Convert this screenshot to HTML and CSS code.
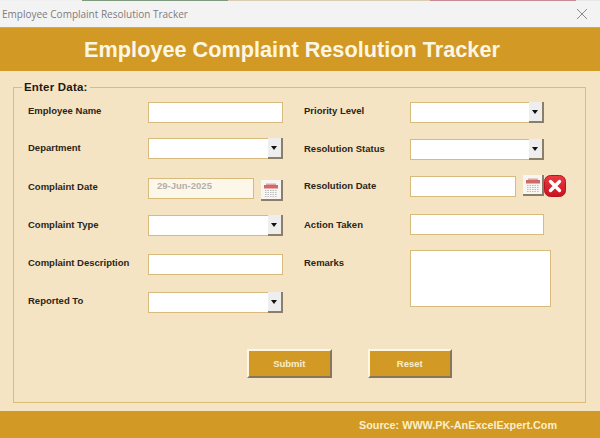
FILE: index.html
```html
<!DOCTYPE html>
<html lang="en">
<head>
<meta charset="utf-8">
<title>Employee Complaint Resolution Tracker</title>
<link rel="stylesheet" href="styles.css">
</head>
<body>
<div class="strip"><i class="s1"></i><i class="s2"></i><i class="s3"></i><i class="s4"></i><i class="s5"></i></div>
<div class="titlebar">
  <span>Employee Complaint Resolution Tracker</span>
  <svg class="close" width="12" height="12" viewBox="0 0 12 12"><path d="M1 1L11 11M11 1L1 11" stroke="#8a8a8a" stroke-width="1" fill="none"/></svg>
</div>
<header class="banner">Employee Complaint Resolution Tracker</header>
<main class="content">
  <fieldset class="panel">
    <legend>Enter Data:</legend>
    <div class="columns">
      <div class="col col-left">
        <div class="row"><label class="lbl-3">Employee Name</label><div class="field"></div></div>
        <div class="row"><label class="lbl-4">Department</label><div class="field combo"><b class="arrow"></b></div></div>
        <div class="row"><label class="lbl-3">Complaint Date</label><div class="field short date">29-Jun-2025</div>
          <div class="cal"><svg width="14" height="14" viewBox="0 0 14 14"><rect x="0" y="2" width="14" height="3.5" fill="#cf6a68"/><rect x="2" y="0.5" width="10" height="1.5" fill="#e2a5a3"/><path d="M1 7.5h12M1 9.5h12M1 11.5h12M1 13.5h12" stroke="#bdbdbd" stroke-width="1" stroke-dasharray="1.5 1"/></svg></div></div>
        <div class="row"><label class="lbl-4">Complaint Type</label><div class="field combo"><b class="arrow"></b></div></div>
        <div class="row"><label class="lbl-3">Complaint Description</label><div class="field"></div></div>
        <div class="row"><label class="lbl-3">Reported To</label><div class="field combo"><b class="arrow"></b></div></div>
      </div>
      <div class="col col-right">
        <div class="row"><label class="lbl-3">Priority Level</label><div class="field combo"><b class="arrow"></b></div></div>
        <div class="row"><label class="lbl-4">Resolution Status</label><div class="field combo"><b class="arrow"></b></div></div>
        <div class="row"><label class="lbl-4">Resolution Date</label><div class="field short"></div>
          <div class="cal cal-tight"><svg width="14" height="14" viewBox="0 0 14 14"><rect x="0" y="2" width="14" height="3.5" fill="#cf6a68"/><rect x="2" y="0.5" width="10" height="1.5" fill="#e2a5a3"/><path d="M1 7.5h12M1 9.5h12M1 11.5h12M1 13.5h12" stroke="#bdbdbd" stroke-width="1" stroke-dasharray="1.5 1"/></svg></div>
          <div class="clear"><svg width="22" height="22" viewBox="0 0 22 22"><defs><linearGradient id="red" x1="0" y1="0" x2="0" y2="1"><stop offset="0" stop-color="#ee3a42"/><stop offset="1" stop-color="#c8121e"/></linearGradient></defs><rect x="0.5" y="0.5" width="21" height="21" rx="6" fill="url(#red)" stroke="#b8141f"/><path d="M6.5 6.5L15.5 15.5M15.5 6.5L6.5 15.5" stroke="#fff" stroke-width="3.4" stroke-linecap="round"/></svg></div></div>
        <div class="row"><label class="lbl-5">Action Taken</label><div class="field"></div></div>
        <div class="row"><label class="lbl-7">Remarks</label><div class="field memo"></div></div>
      </div>
    </div>
    <div class="actions">
      <button class="btn" type="button">Submit</button>
      <button class="btn" type="button">Reset</button>
    </div>
  </fieldset>
</main>
<footer class="foot">Source: WWW.PK-AnExcelExpert.Com</footer>
</body>
</html>
```

FILE: styles.css
```css
* { box-sizing: border-box; }
html, body { margin: 0; padding: 0; }
body {
  width: 600px;
  height: 438px;
  overflow: hidden;
  display: flex;
  flex-direction: column;
  font-family: "Liberation Sans", Arial, sans-serif;
  background: #f5e4c3;
}
.strip { display: flex; height: 1px; flex: none; }
.strip i { display: block; }
.s1 { width: 82px; background: #efefef; }
.s2 { width: 146px; background: #7f9a7f; }
.s3 { width: 202px; background: #d9cdb0; }
.s4 { width: 146px; background: #c98a93; }
.s5 { flex: 1; background: #e8e8e8; }
.titlebar {
  height: 27px;
  flex: none;
  display: flex;
  align-items: center;
  justify-content: space-between;
  padding: 0 12px 1px 2px;
  background: #f3f3f4;
  border-bottom: 1px solid #b5ab98;
  font-family: "Open Sans", sans-serif;
  font-size: 10px;
  color: #7c7c7c;
}
.banner {
  height: 43px;
  flex: none;
  display: flex;
  align-items: center;
  justify-content: center;
  padding-right: 16px;
  background: #d29a25;
  color: #fdf6e3;
  font-size: 21.7px;
  font-weight: 700;
}
.content {
  flex: 1;
  padding: 9px 14px 8px 13px;
  display: flex;
  min-height: 0;
}
.panel {
  flex: 1;
  margin: 0;
  min-width: 0;
  padding: 8px 0 0 14px;
  border: 1px solid #dbbb78;
}
.panel legend {
  margin-left: -6px;
  padding: 0 2px;
  font-size: 11.5px;
  font-weight: 700;
  letter-spacing: 0.2px;
  color: #1e1a12;
  line-height: 14px;
}
.columns { display: flex; gap: 21px; }
.col { display: grid; flex: none; align-content: start; }
.col-left { width: 255px; grid-template-rows: 36px 40px 37px 39px 38px 22px; }
.col-right { width: 262px; grid-template-rows: 37px 37px 38px 36px 58px; }
.row { display: flex; align-items: flex-start; }
.row label {
  flex: none;
  width: 120px;
  font-size: 9.5px;
  line-height: 12px;
  font-weight: 700;
  color: #2b2519;
}
.col-right .row label { width: 106px; }
.row .lbl-3 { padding-top: 3px; }
.row .lbl-4 { padding-top: 4px; }
.row .lbl-5 { padding-top: 5px; }
.row .lbl-7 { padding-top: 7px; }
.field {
  flex: none;
  position: relative;
  width: 135px;
  height: 21px;
  background: #fff;
  border: 1px solid #d8bb7c;
}
.field.short { width: 106px; }
.field.memo { height: 57px; width: 141px; }
.col-right .field { width: 134px; }
.col-right .field.short { width: 106px; }
.col-right .field.memo { width: 141px; }
.field.date {
  background: #fdf7ea;
  color: #b4b0a8;
  font-size: 9.5px;
  font-weight: 700;
  line-height: 12px;
  padding: 1px 0 0 8px;
}
.arrow {
  position: absolute;
  top: -1px;
  right: -1px;
  bottom: -1px;
  width: 15px;
  background: #eeeeee;
  border-right: 2px solid #8b7f6a;
  border-bottom: 2px solid #8b7f6a;
}
.arrow::after {
  content: "";
  position: absolute;
  left: 3px;
  top: 8px;
  border-left: 3.5px solid transparent;
  border-right: 3.5px solid transparent;
  border-top: 4px solid #111;
}
.cal {
  flex: none;
  width: 22px;
  height: 21px;
  margin: 2px 0 0 7px;
  display: flex;
  align-items: center;
  justify-content: center;
  background: #f7f6f3;
  border-right: 2px solid #8b7f6a;
  border-bottom: 2px solid #8b7f6a;
}
.cal-tight { width: 21px; margin: -1px 0 0 7px; }
.clear { flex: none; height: 22px; margin: -1px 0 0 0; }
.clear svg { display: block; }
.actions {
  display: flex;
  gap: 36px;
  padding: 35px 0 0 219px;
}
.btn {
  width: 84.5px;
  height: 29px;
  padding: 0;
  background: #d29a25;
  color: #f9edcf;
  font: 700 9.5px "Liberation Sans", Arial, sans-serif;
  border: 2px solid;
  border-color: #fff7e6 #85765c #85765c #fff7e6;
}
.foot {
  height: 27px;
  flex: none;
  display: flex;
  align-items: center;
  justify-content: flex-end;
  padding-right: 43px;
  background: #d29a25;
  color: #fbeeca;
  font-size: 10.8px;
  font-weight: 700;
}
```
